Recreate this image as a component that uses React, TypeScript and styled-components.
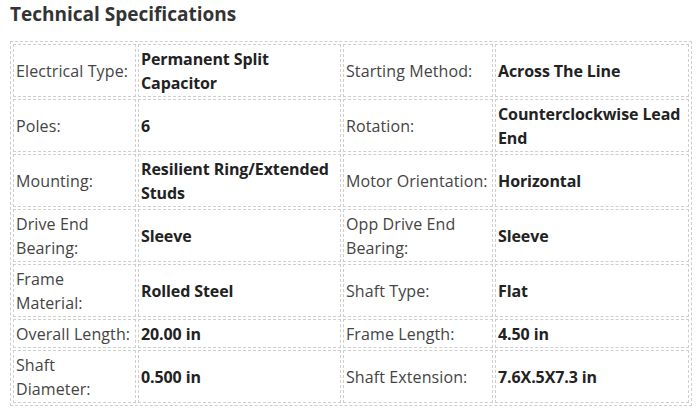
import React from "react";
import styled, { createGlobalStyle } from "styled-components";

const GlobalStyle = createGlobalStyle`
  body {
    margin: 0;
    background: #fff;
    font-family: "Segoe UI", "Open Sans", "Noto Sans", sans-serif;
  }
`;

const Wrapper = styled.section`
  padding: 0 0 0 10px;
`;

const Title = styled.h2`
  margin: 0;
  padding-top: 2px;
  height: 39px;
  font-size: 19px;
  line-height: 24px;
  font-weight: 700;
  color: #333;
`;

const SpecTable = styled.table`
  table-layout: fixed;
  width: 682px;
  border: 1px dashed #cfcfcf;
  border-collapse: separate;
  border-spacing: 2px;
`;

const Col = styled.col<{ w: number }>`
  width: ${(p) => p.w}px;
`;

const Cell = styled.td<{ strong?: boolean }>`
  border: 1px dashed #cfcfcf;
  padding: 2px 2px 1px;
  vertical-align: middle;
  font-size: 16px;
  line-height: 24px;
  color: ${(p) => (p.strong ? "#222" : "#444")};
  font-weight: ${(p) => (p.strong ? 700 : 400)};
  letter-spacing: ${(p) => (p.strong ? "-0.1px" : "0.1px")};
  white-space: nowrap;
`;

type Spec = [React.ReactNode, React.ReactNode, React.ReactNode, React.ReactNode];

const rows: Spec[] = [
  ["Electrical Type:", <>Permanent Split<br />Capacitor</>, "Starting Method:", "Across The Line"],
  ["Poles:", "6", "Rotation:", <>Counterclockwise Lead<br />End</>],
  ["Mounting:", <>Resilient Ring/Extended<br />Studs</>, "Motor Orientation:", "Horizontal"],
  [<>Drive End<br />Bearing:</>, "Sleeve", <>Opp Drive End<br />Bearing:</>, "Sleeve"],
  [<>Frame<br />Material:</>, "Rolled Steel", "Shaft Type:", "Flat"],
  ["Overall Length:", "20.00 in", "Frame Length:", "4.50 in"],
  [<>Shaft<br />Diameter:</>, "0.500 in", "Shaft Extension:", "7.6X.5X7.3 in"],
];

export default function App() {
  return (
    <>
      <GlobalStyle />
      <Wrapper>
        <Title>Technical Specifications</Title>
        <SpecTable>
          <colgroup>
            <Col w={123} />
            <Col w={203} />
            <Col w={150} />
            <Col w={194} />
          </colgroup>
          <tbody>
            {rows.map((r, i) => (
              <tr key={i}>
                <Cell>{r[0]}</Cell>
                <Cell strong>{r[1]}</Cell>
                <Cell>{r[2]}</Cell>
                <Cell strong>{r[3]}</Cell>
              </tr>
            ))}
          </tbody>
        </SpecTable>
      </Wrapper>
    </>
  );
}
